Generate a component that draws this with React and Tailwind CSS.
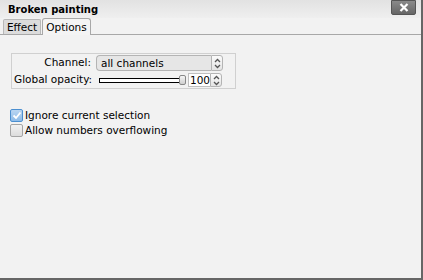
import React from 'react';

const font = { fontFamily: '"DejaVu Sans", "Liberation Sans", sans-serif' };

function Spinner({ className = '' }) {
  return (
    <div className={`w-[12px] h-full border border-[#b4b4b4] rounded-r-[3px] bg-gradient-to-b from-[#fbfbfb] to-[#e4e4e4] flex flex-col items-center justify-center ${className}`}>
      <svg width="7" height="11" viewBox="0 0 7 11">
        <path d="M1 4 L3.5 1.5 L6 4" fill="none" stroke="#555" strokeWidth="1.3" />
        <path d="M1 7 L3.5 9.5 L6 7" fill="none" stroke="#555" strokeWidth="1.3" />
      </svg>
    </div>
  );
}

export default function App() {
  return (
    <div className="w-[423px] h-[280px] bg-[#f2f2f2] border-r-2 border-b-2 border-[#666] text-[10.5px] text-black flex flex-col overflow-hidden" style={font}>
      {/* title bar */}
      <div className="h-[18px] flex items-start justify-between bg-gradient-to-b from-[#e2e2e2] to-[#efefef] pl-[8px] pr-[4px]">
        <span className="font-bold text-[10px] leading-none mt-[5px]">Broken painting</span>
        <div className="w-[25px] h-[15px] rounded-b-[2px] border border-[#555] bg-gradient-to-b from-[#8a8a8a] to-[#666] flex items-center justify-center mr-[1px]">
          <svg width="10" height="9" viewBox="0 0 10 9">
            <path d="M1.5 1 L8.5 8 M8.5 1 L1.5 8" stroke="#fff" strokeWidth="2.2" />
          </svg>
        </div>
      </div>

      {/* tabs */}
      <div className="flex items-end h-[17px] pl-[3px] pr-[7px] border-b border-[#a8a8a8]">
        <div className="h-[15px] w-[38px] text-center border border-b-0 border-[#b8b8b8] bg-[#dcdcdc] leading-[14px] rounded-t-[2px]">Effect</div>
        <div className="h-[17px] w-[49px] text-center ml-[1px] border border-b-0 border-[#a8a8a8] bg-[#f4f4f4] leading-[17px] rounded-t-[3px] -mb-px">Options</div>
      </div>

      {/* options */}
      <div className="pl-[11px] pt-[18px]">
        <div className="w-[225px] h-[36px] border border-[#d0d0d0] flex flex-col justify-center gap-[2px]">
          <div className="flex items-center h-[16px]">
            <span className="w-[84px] text-right pr-[5px]">Channel:</span>
            <div className="flex h-[16px]">
              <div className="w-[115px] h-full border border-r-0 border-[#b4b4b4] rounded-l-[4px] bg-[#e6e6e6] pl-[4px] leading-[14px]">all channels</div>
              <Spinner />
            </div>
          </div>
          <div className="flex items-center h-[14px]">
            <span className="w-[87px] pl-[2px]">Global opacity:</span>
            <div className="relative w-[88px] h-[10px] flex items-center">
              <div className="w-[82px] h-[5px] border border-black bg-white"></div>
              <div className="absolute left-[80px] top-0 w-[7px] h-[10px] rounded-[2px] border border-[#888] bg-gradient-to-b from-[#f6f6f6] to-[#cfcfcf]"></div>
            </div>
            <div className="flex h-[14px] ml-[1px]">
              <div className="w-[22px] h-full border border-r-0 border-[#c0c0c0] bg-white text-right leading-[12px]">100</div>
              <Spinner />
            </div>
          </div>
        </div>

        <div className="mt-[20px] flex flex-col gap-[2px] -ml-[1px]">
          <label className="flex items-center h-[13px]">
            <span className="w-[13px] h-[13px] rounded-[2px] border border-[#4b8fd0] bg-gradient-to-b from-[#b9d6f2] to-[#8ebbe8] flex items-center justify-center">
              <svg width="10" height="9" viewBox="0 0 10 9">
                <path d="M1.5 4.5 L4 7 L8.5 1.5" fill="none" stroke="#fff" strokeWidth="1.8" />
              </svg>
            </span>
            <span className="ml-[2px]">Ignore current selection</span>
          </label>
          <label className="flex items-center h-[13px]">
            <span className="w-[13px] h-[13px] rounded-[2px] border border-[#a5a5a5] bg-gradient-to-b from-[#f2f2f2] to-[#dcdcdc]"></span>
            <span className="ml-[2px]">Allow numbers overflowing</span>
          </label>
        </div>
      </div>
    </div>
  );
}
